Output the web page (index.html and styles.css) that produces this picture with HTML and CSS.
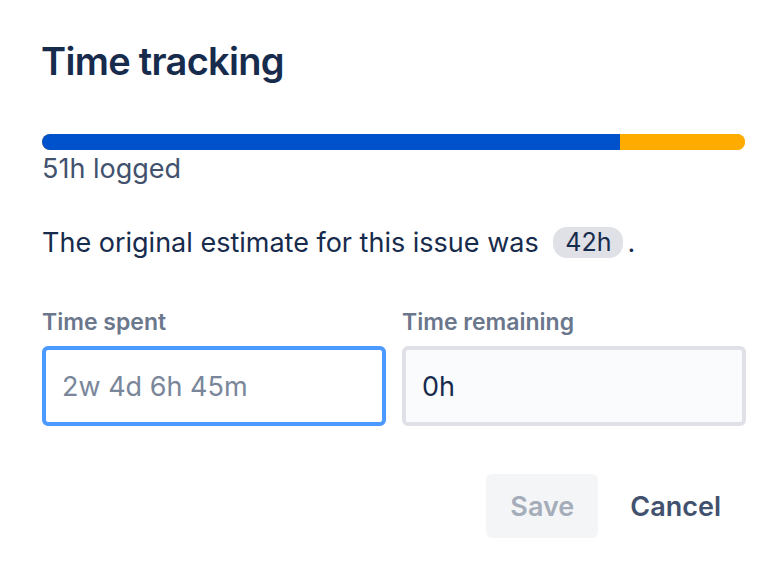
FILE: index.html
```html
<!DOCTYPE html>
<html lang="en">
<head>
<meta charset="utf-8">
<title>Time tracking</title>
<link rel="stylesheet" href="styles.css">
</head>
<body>
<div class="dialog">
  <h1 class="title">Time tracking</h1>
  <div class="bar">
    <div class="bar-logged" style="width: 82.2%"></div>
    <div class="bar-over"></div>
  </div>
  <div class="logged">51h logged</div>
  <p class="estimate">The original estimate for this issue was <span class="badge">42h</span>.</p>
  <div class="fields">
    <div class="field">
      <label class="label" for="spent">Time spent</label>
      <input class="input input-focus" id="spent" type="text" placeholder="2w 4d 6h 45m">
    </div>
    <div class="field">
      <label class="label" for="remaining">Time remaining</label>
      <input class="input input-subtle" id="remaining" type="text" value="0h">
    </div>
  </div>
  <div class="actions">
    <button class="btn btn-save" type="button">Save</button>
    <button class="btn btn-cancel" type="button">Cancel</button>
  </div>
</div>
</body>
</html>
```

FILE: styles.css
```css
html, body {
  margin: 0;
  padding: 0;
  background: #ffffff;
}
body {
  font-family: Inter, "Noto Sans", "Liberation Sans", sans-serif;
  color: #172B4D;
}
.dialog {
  width: 704px;
  padding: 37px 32px 0 42px;
  display: flex;
  flex-direction: column;
}
.title {
  margin: 0 0 0 -1px;
  font-size: 38px;
  line-height: 48px;
  font-weight: 600;
  color: #172B4D;
  letter-spacing: -0.7px;
}
.bar {
  margin-top: 49px;
  height: 16px;
  width: 703px;
  border-radius: 8px;
  overflow: hidden;
  display: flex;
  background: #FFAB00;
}
.bar-logged {
  background: #0052CC;
  height: 100%;
}
.bar-over {
  flex: 1;
  background: #FFAB00;
}
.logged {
  margin-top: 3px;
  font-size: 27px;
  line-height: 32px;
  color: #42526E;
}
.estimate {
  margin: 42px 0 0;
  font-size: 27px;
  line-height: 32px;
  color: #172B4D;
}
.badge {
  display: inline-block;
  background: #DFE1E6;
  border-radius: 14px;
  padding: 0 12px;
  line-height: 31px;
  margin: 0 4px 0 7px;
  font-size: 25px;
  vertical-align: 1px;
}
.fields {
  margin-top: 47px;
  display: grid;
  grid-template-columns: 1fr 1fr;
  column-gap: 16px;
}
.field {
  display: flex;
  flex-direction: column;
}
.label {
  font-size: 23px;
  line-height: 32px;
  font-weight: 600;
  color: #6B778C;
  margin-bottom: 8px;
}
.input {
  box-sizing: border-box;
  height: 80px;
  width: 100%;
  border-radius: 6px;
  border: 4px solid #DFE1E6;
  padding: 0 16px;
  font-family: inherit;
  font-size: 27px;
  color: #172B4D;
  outline: none;
}
.input::placeholder {
  color: #7A869A;
}
.input-focus {
  border-color: #4C9AFF;
  background: #ffffff;
}
.input-subtle {
  background: #FAFBFC;
}
.actions {
  margin-top: 48px;
  display: flex;
  justify-content: flex-end;
  gap: 8px;
}
.btn {
  height: 64px;
  border: none;
  border-radius: 6px;
  padding: 0 24px;
  font-family: inherit;
  font-size: 27px;
  font-weight: 600;
  background: transparent;
}
.btn-save {
  width: 112px;
  background: #F4F5F7;
  color: #A5ADBA;
}
.btn-cancel {
  color: #42526E;
  padding: 0 25px 0 24px;
}
```
